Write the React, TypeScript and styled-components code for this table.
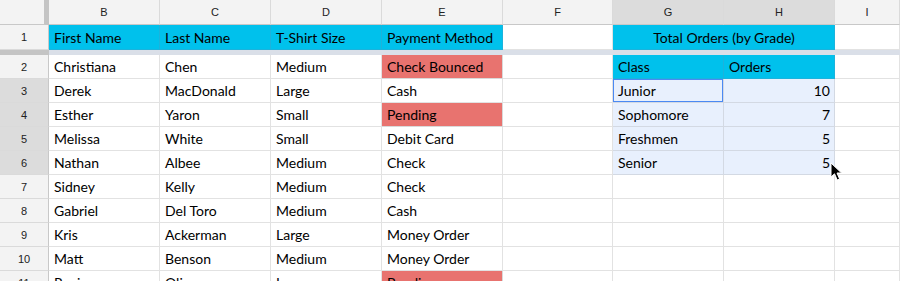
import { FC } from "react";
import styled, { createGlobalStyle, css } from "styled-components";

const GlobalStyle = createGlobalStyle`
  html, body {
    margin: 0;
    padding: 0;
    background: #ffffff;
    overflow: hidden;
  }
`;

const COLS = ["B", "C", "D", "E", "F", "G", "H", "I"];
const WIDTHS = [111, 111, 111, 121, 110, 111, 111];

const Sheet = styled.div`
  position: relative;
  width: 900px;
  height: 281px;
  overflow: hidden;
  display: grid;
  grid-template-columns: 49px ${WIDTHS.map((w) => `${w}px`).join(" ")} 1fr;
  grid-template-rows: 25px 25px 5px repeat(10, 24px);
  font-family: Lato, "Liberation Sans", sans-serif;
  font-size: 14px;
  color: #000;
`;

const Corner = styled.div`
  background: #f3f3f3;
  border-right: 5px solid #c4c4c4;
  border-bottom: 1px solid #c8c8c8;
`;

const ColHead = styled.div<{ $selected?: boolean }>`
  display: flex;
  align-items: center;
  justify-content: center;
  background: ${(p) => (p.$selected ? "#dcdcdc" : "#f3f3f3")};
  border-right: 1px solid #dadada;
  border-bottom: 1px solid #c8c8c8;
  font-family: "Liberation Sans", Arial, sans-serif;
  font-size: 11px;
  color: #222;
`;

const RowHead = styled.div<{ $selected?: boolean }>`
  display: flex;
  align-items: center;
  justify-content: center;
  background: ${(p) => (p.$selected ? "#dcdcdc" : "#f3f3f3")};
  border-right: 1px solid #c8c8c8;
  border-bottom: 1px solid #dadada;
  font-family: "Liberation Sans", Arial, sans-serif;
  font-size: 11px;
  color: #222;
`;

const FreezeBar = styled.div<{ $head?: boolean }>`
  background: ${(p) => (p.$head ? "#c4c4c4" : "#dadfe8")};
`;

type Tone = "plain" | "header" | "alert" | "picked";

const Cell = styled.div<{ $tone?: Tone; $right?: boolean; $center?: boolean; $span?: number }>`
  box-sizing: border-box;
  display: flex;
  align-items: center;
  padding: 0 4px 0 5px;
  white-space: nowrap;
  overflow: hidden;
  border-right: 1px solid #e2e2e2;
  border-bottom: 1px solid #e2e2e2;
  background: #fff;
  ${(p) => p.$span && css`grid-column: span ${p.$span};`}
  ${(p) => p.$right && css`justify-content: flex-end;`}
  ${(p) => p.$center && css`justify-content: center;`}
  ${(p) =>
    p.$tone === "header" &&
    css`
      background: #00c1ec;
      border-color: #1cb3dc;
    `}
  ${(p) =>
    p.$tone === "alert" &&
    css`
      background: #e8736f;
      border-color: #d9d9d9;
    `}
  ${(p) =>
    p.$tone === "picked" &&
    css`
      background: #e8f0fd;
      border-color: #d3d9e3;
    `}
`;

const ActiveCell = styled(Cell)`
  position: relative;
  &::after {
    content: "";
    position: absolute;
    inset: -1px -1px -1px -1px;
    border: 2px solid #4a89f3;
    pointer-events: none;
  }
`;

const Pointer = styled.svg`
  position: absolute;
  left: 830px;
  top: 162px;
  width: 14px;
  height: 20px;
`;

type Row = [string, string, string, string, boolean];

const people: Row[] = [
  ["Christiana", "Chen", "Medium", "Check Bounced", true],
  ["Derek", "MacDonald", "Large", "Cash", false],
  ["Esther", "Yaron", "Small", "Pending", true],
  ["Melissa", "White", "Small", "Debit Card", false],
  ["Nathan", "Albee", "Medium", "Check", false],
  ["Sidney", "Kelly", "Medium", "Check", false],
  ["Gabriel", "Del Toro", "Medium", "Cash", false],
  ["Kris", "Ackerman", "Large", "Money Order", false],
  ["Matt", "Benson", "Medium", "Money Order", false],
  ["Regina", "Olivera", "Large", "Pending", true],
];

const grades: [string, number][] = [
  ["Junior", 10],
  ["Sophomore", 7],
  ["Freshmen", 5],
  ["Senior", 5],
];

const App: FC = () => {
  return (
    <>
      <GlobalStyle />
      <Sheet>
        <Corner />
        {COLS.map((c) => (
          <ColHead key={c} $selected={c === "G" || c === "H"}>
            {c}
          </ColHead>
        ))}

        <RowHead>1</RowHead>
        <Cell $tone="header">First Name</Cell>
        <Cell $tone="header">Last Name</Cell>
        <Cell $tone="header">T-Shirt Size</Cell>
        <Cell $tone="header">Payment Method</Cell>
        <Cell />
        <Cell $tone="header" $span={2} $center>
          Total Orders (by Grade)
        </Cell>
        <Cell />

        <FreezeBar $head />
        {COLS.map((c) => (
          <FreezeBar key={c} />
        ))}

        {people.map(([first, last, size, pay, alert], i) => {
          const rowNum = i + 2;
          const gradeIdx = i - 1;
          const grade = grades[gradeIdx];
          return [
            <RowHead key={`h${rowNum}`} $selected={rowNum >= 3 && rowNum <= 6}>
              {rowNum}
            </RowHead>,
            <Cell key={`b${rowNum}`}>{first}</Cell>,
            <Cell key={`c${rowNum}`}>{last}</Cell>,
            <Cell key={`d${rowNum}`}>{size}</Cell>,
            <Cell key={`e${rowNum}`} $tone={alert ? "alert" : "plain"}>
              {pay}
            </Cell>,
            <Cell key={`f${rowNum}`} />,
            rowNum === 2 ? (
              <Cell key="g2" $tone="header">Class</Cell>
            ) : grade && gradeIdx === 0 ? (
              <ActiveCell key={`g${rowNum}`} $tone="picked">
                {grade[0]}
              </ActiveCell>
            ) : grade ? (
              <Cell key={`g${rowNum}`} $tone="picked">{grade[0]}</Cell>
            ) : (
              <Cell key={`g${rowNum}`} />
            ),
            rowNum === 2 ? (
              <Cell key="h2" $tone="header">Orders</Cell>
            ) : grade ? (
              <Cell key={`hh${rowNum}`} $tone="picked" $right>
                {grade[1]}
              </Cell>
            ) : (
              <Cell key={`hh${rowNum}`} />
            ),
            <Cell key={`i${rowNum}`} />,
          ];
        })}

        <Pointer viewBox="0 0 14 20">
          <path
            d="M1 1 L1 15 L4.5 11.8 L7.2 18 L9.6 17 L7 11 L11.6 11 Z"
            fill="#000"
            stroke="#fff"
            strokeWidth="1"
            strokeLinejoin="round"
          />
        </Pointer>
      </Sheet>
    </>
  );
};

export default App;
